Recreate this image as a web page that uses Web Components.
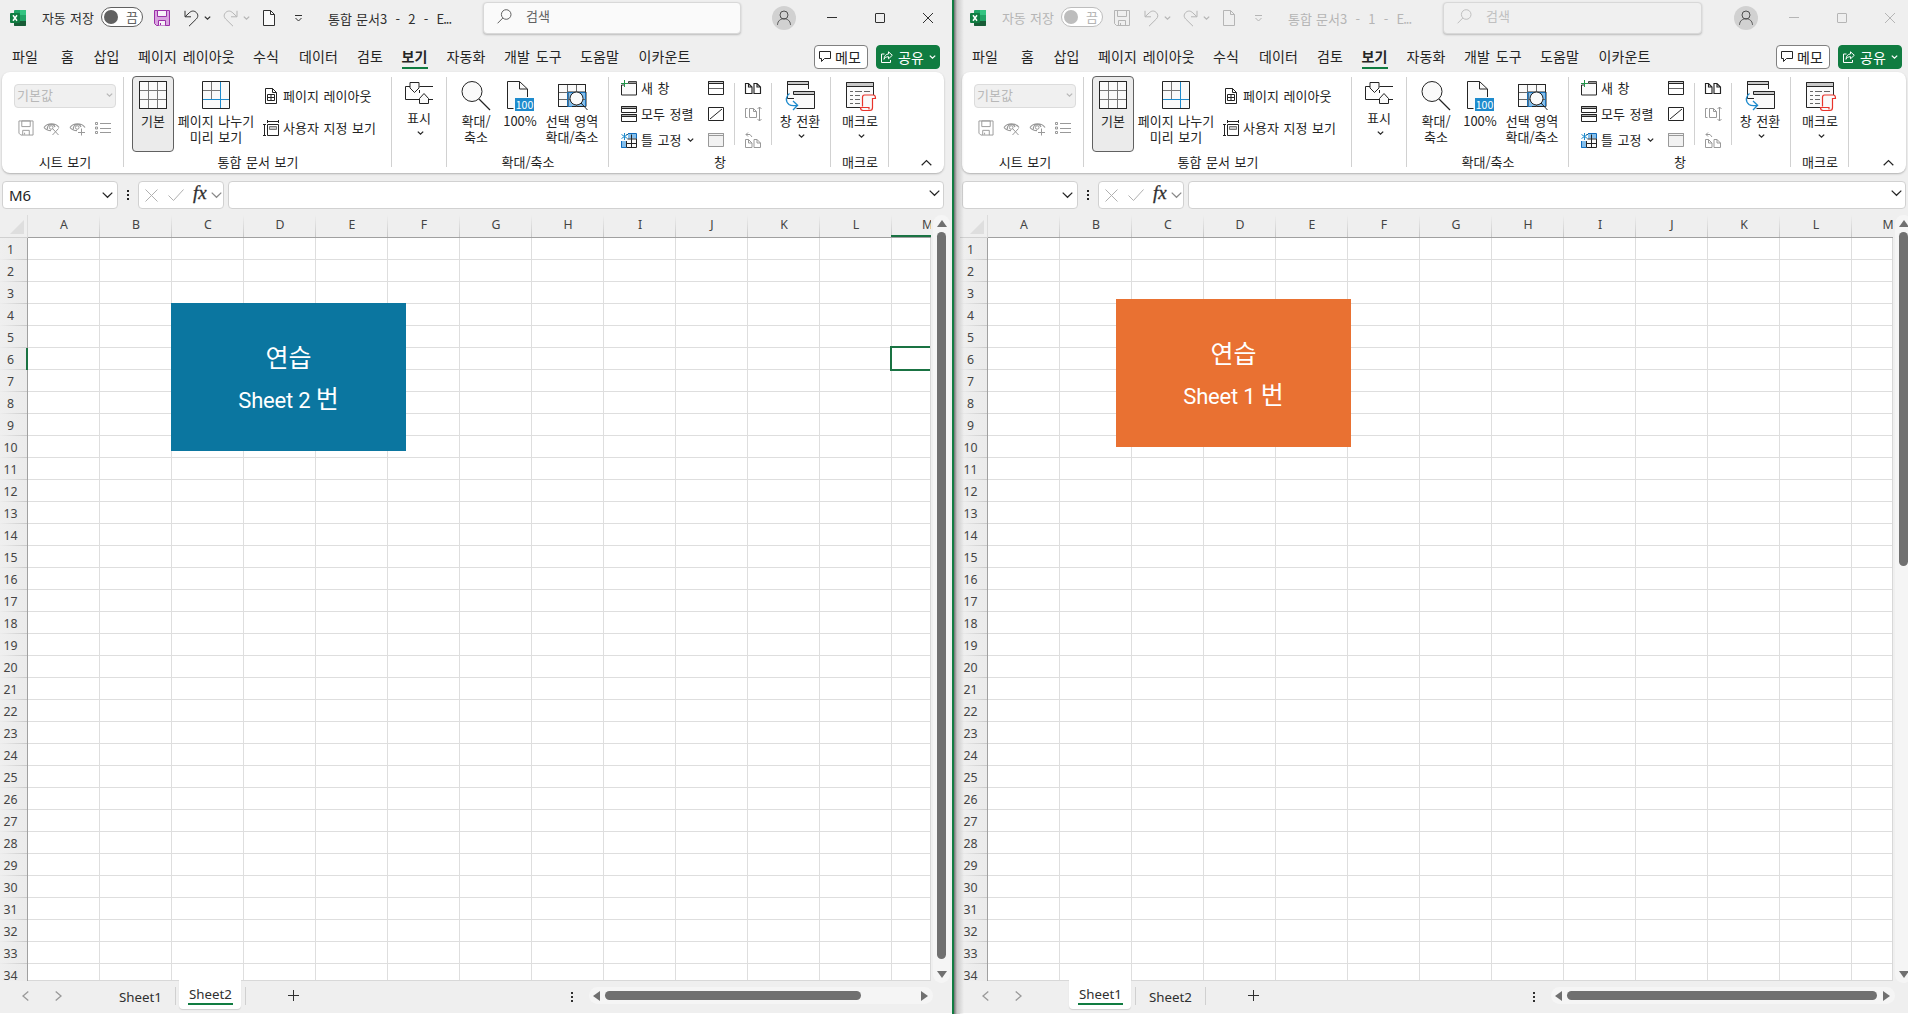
<!DOCTYPE html>
<html lang="ko">
<head>
<meta charset="utf-8">
<title>통합 문서3 - Excel</title>
<style>
    html, body {
        margin: 0;
        height: 100%;
        overflow: hidden;
        background: #efefef;
    }
    body {
        display: flex;
        font: 13px/16px "Noto Sans CJK KR", sans-serif;
        color: #242424;
    }
</style>
</head>
<body>
<excel-window class="front" size="952" book="2" cell="M6" active="2" thumb="727" hthumb="256"></excel-window>
<excel-window inactive size="954" book="1" cell="" active="1" thumb="334" hthumb="310"></excel-window>

<script>
// name: [width, height, markup]
const ICONS = {
    logo: [16, 16, `<g stroke="none"><rect x="4" width="12" height="16" rx="1" fill="#21a366"/><path d="M10 0h5a1 1 0 0 1 1 1v4h-6z" fill="#33c481"/><path d="M4 5h6v6H4z" fill="#107c41"/><path d="M10 5h6v6h-6z" fill="#21a366"/><path d="M4 11h12v4a1 1 0 0 1-1 1H5a1 1 0 0 1-1-1z" fill="#185c37"/><rect y="3" width="10" height="10" rx="1" fill="#107c41"/></g><path d="M3 5.300l4 5.400M7 5.300l-4 5.400" stroke="#fff" stroke-width="1.500"/>`],
    save: [16, 16, `<path d="M.5.5h15v15h-13l-2-2z" fill="var(--save-fill,none)"/><path d="M3.500.5h9v6h-9zM4.500 15.500v-5h7v5" fill="var(--save-inner,none)"/><path d="M6.500 15v-2"/>`],
    undo: [15, 17, `<path d="M1 .8v6h6M1.300 6.500L5.800 2.300c2.500-2 5-1.300 6.500.2 2 2 2 4.500 0 6.500L5 16.200"/>`],
    redo: [15, 17, `<path d="M14 .8v6H8M13.700 6.500L9.200 2.300c-2.500-2-5-1.300-6.500.2-2 2-2 4.500 0 6.500l7.300 7.200"/>`],
    page: [12, 16, `<path d="M.5.5h7l4 4v11H.5z" fill="var(--page-fill,#fafafa)"/><path d="M7.500.5v4h4"/>`],
    qat: [9, 7, `<path d="M1 .5h7M1.500 3l3 3 3-3"/>`],
    chev: [7, 4, `<path d="M.8.6l2.700 2.600L6.200.6" stroke-width="1.300"/>`],
    chevL: [11, 6, `<path d="M.7.6l4.800 4.700L10.300.6" stroke-width="1.200"/>`],
    up: [11, 6, `<path d="M.7 5.300L5.500.6l4.800 4.700" stroke-width="1.200"/>`],
    search: [15, 15, `<circle cx="9.200" cy="5.500" r="4.800"/><path d="M5.800 9L.6 14.300"/>`],
    person: [24, 24, `<circle cx="12" cy="12" r="12" fill="#d1d1d1" stroke="none"/><circle cx="12" cy="9" r="4"/><path d="M5.500 18.800c.3-4 2.800-6 6.500-6s6.200 2 6.500 6"/>`],
    min: [10, 10, `<path d="M0 4.500h10"/>`],
    max: [10, 10, `<rect x=".5" y=".5" width="9" height="9" rx=".5"/>`],
    close: [10, 10, `<path d="M0 0l10 10M10 0L0 10"/>`],
    memo: [12, 11, `<path d="M.5.5h11v7h-6l-3 3v-3h-2z"/>`],
    share: [12, 12, `<path d="M3.500 3H.5v8.500h9V9M7.500.8l3.800 3.500-3.800 3.500V5.700C5 5.700 3.700 6.800 3 8.300 3.300 5 4.800 3.200 7.500 2.900z"/>`],
    eyex: [17, 15, `<path d="M1 6.500c3.500-5 11.500-5 15 0M4.500 8.500A4 4 0 0 1 8.200 3.300 4 4 0 0 1 12 6M1 6.500C3 9 5.500 9.700 8 9.700" stroke-width="1.200"/><circle cx="8.200" cy="6.500" r="1.800"/><path d="M9.500 7.500l6 6.500M15.500 7.500l-6 6.500"/>`],
    eyeplus: [17, 15, `<path d="M1 6.500c3.500-5 11.500-5 15 0M4.500 8.500A4 4 0 0 1 8.200 3.300 4 4 0 0 1 12 6M1 6.500C3 9 5.500 9.700 8 9.700" stroke-width="1.200"/><circle cx="8.200" cy="6.500" r="1.800"/><path d="M12.500 7.500v7M9 11.500h7"/>`],
    list: [16, 12, `<path d="M5 1.500h11M5 6.500h11M5 10.500h11"/><path d="M.5.5h2v2h-2zM.5 5h2v2h-2zM.5 9.500h2v2h-2z"/>`],
    normal: [28, 28, `<path d="M.5.500h27v27H.5z" fill="#fafafa"/><path d="M9.500 1v26M18.500 1v26M1 9.500h26M1 18.500h26" stroke="#777"/><path d="M.5.500h27v27H.5z"/>`],
    pagebreak: [28, 28, `<path d="M.5.500h27v27H.5z" fill="#fafafa"/><path d="M9.500 1v17M1 9.500h17" stroke="#777"/><path d="M18.500 1v26M1 18.500h26" stroke="#1e8bcd"/>`],
    pagelayout: [12, 16, `<path d="M.5.500h7l4 4v11H.5z"/><path d="M7.500.5v4h4M2.500 6.500h7v6h-7zM6 6.500v6M2.500 9.500h7"/>`],
    custom: [16, 16, `<path d="M0 4.500h3M1.500 4.500v11M0 15.500h3M4.500 0v3M15.500 0v3M4.500 1.500h11"/><path d="M4.500 4.500h11v11h-11z"/><path d="M6.500 6.500h7v3h-7z" fill="#c8c8c8" stroke="#777"/>`],
    show: [29, 23, `<path d="M5 5.500H.5v13h14M14.500 5.500H28M14.500 9v3M24 18.500h4"/><path d="M5 1.500h9V7L9.500 11.500 5 7z" fill="#fafafa"/><path d="M14.500 22.500v-5l4.500-5 4.500 5v5z" fill="#fafafa"/>`],
    zoom: [30, 30, `<circle cx="11" cy="10.500" r="10" fill="#fafafa"/><path d="M18 18l11 11" stroke-width="1.300"/>`],
    hundred: [27, 30, `<path d="M6.500 27.500h-6V.5h12l8 7.500v8" fill="#fafafa"/><path d="M12.500.5V8h8"/><path d="M8 17h19v13H8z" fill="#1e8bcd" stroke="none"/><text x="17.500" y="27.500" text-anchor="middle" font-family="Noto Sans CJK KR" font-size="10.500" fill="#fff" stroke="none">100</text>`],
    zoomsel: [30, 30, `<g transform="translate(1 0)"><path d="M.5 3.500h27v22H.5z" fill="#fafafa"/><path d="M10 11h18v14.500H10z" fill="#83beec"/><path d="M.5 11.500h27M.5 18.500h27M9.500 3.500v22M18.500 3.500v22" stroke="#666"/><path d="M27.500 25.500V11.500h-18v14H14" stroke="#1a6fb5"/><path d="M9.500 25.500H.5v-22h27v8"/><circle cx="18.500" cy="17.500" r="6.500" fill="#fafafa"/><path d="M23 22l6.500 7"/></g>`],
    newwin: [16, 16, `<path d="M3.500 5H.5v10h15V2.500H8" fill="#fafafa"/><path d="M7.500 1.500h8v2h-8z" fill="#999" stroke="#444"/><path d="M3.500 0v7M0 3.500h7" stroke="#21954a"/>`],
    arrange: [16, 16, `<path d="M.5.5h15v6H.5zM.5 8.500h15v7H.5z"/><path d="M.5.500h15v2H.5zM.5 8.500h15v2H.5z" fill="#aaa"/>`],
    freeze: [16, 15, `<path d="M5.500 1.500h10v13H.5V8" fill="#fafafa"/><path d="M7 1h9v4.500H7zM0 8h5.500v7H0z" fill="#83beec" stroke="none"/><path d="M6.500 6h9M6 10.500h9.500M5.500 8v6.500M10.500 1.500v13"/><path d="M7 .5h8.500v5M.5 8v6.500h5" stroke="#0f6cbd"/><path d="M3.500 0v7M.5 1.500l6 4M6.500 1.500l-6 4" stroke="#1e8bcd"/>`],
    split: [16, 14, `<path d="M.5.500h15v13H.5z"/><path d="M.5.500h15v2H.5z" fill="#c8c8c8"/><path d="M1 7.500h14" stroke="#666"/>`],
    hide: [16, 14, `<path d="M.5.500h15v13H.5zM2 12L14 2"/>`],
    unhide: [16, 14, `<path d="M.5.500h15v13H.5z" fill="#f2f2f2"/><path d="M.5.500h15v2H.5z"/>`],
    side: [16, 11, `<path d="M.5.500h3L7 4v6.500H.5zM3.500.5V4H7M9 .5h3L15.500 4v6.500H9zM12 .5V4h3.500" stroke-width="1.150"/>`],
    sync: [16, 16, `<path d="M2.500 2.500h-2v9h2M4.500 2.500h4l3 3v6h-7zM8.500 2.500v3h3M14.500 1v14M12.500 3l2-2 2 2M12.500 13l2 2 2-2"/>`],
    reset: [16, 16, `<path d="M.5 7.500h3L7 11v4.500H.5zM3.500 7.500V11H7M9 7.500h3l3.500 3.500v4.500H9zM12 7.500V11h3.500M3 .5l-2 2 2 2M1 2.500h4l2 2.500"/>`],
    switchwin: [30, 29, `<path d="M9 17.500H2.500V.5h21V8" fill="#fafafa"/><path d="M2.500.500h21v3h-21z" fill="#c8c8c8"/><path d="M8.500 10.500h21v17h-18" fill="#fafafa"/><path d="M8.500 10.500h21v3h-21z" fill="#c8c8c8"/><path d="M4.500 12.500c-3.800 2.500-4.500 7.500-.5 11 2 1.600 5 1.400 8.500.8M8 20l4.600 4.300L8 29" stroke="#1e8bcd" stroke-width="1.300"/>`],
    macro: [30, 30, `<g transform="translate(1 0)"><path d="M16 26.500H.5V1.500h27v13" fill="#fafafa"/><path d="M.5 1.500h27v4H.5z" fill="#c8c8c8"/><path d="M4 10.500h3M9 10.500h7M18 10.500h6M4 14.500h3M9 14.500h5M4 18.500h3M9 18.500h5M4 22.500h3M9 22.500h5" stroke="#666"/><path d="M16.500 25.500v-9c0-2 1-2.500 2-2.500h9c1.500 0 2 1 2 3.500h-3v9c0 2-1 3-2.500 3h-7c-2 0-2.500-1-2.500-3h8.500v2" fill="#fafafa" stroke="#e8342c" stroke-width="1.200"/></g>`],
    dots: [2, 10, `<path d="M0 0h2v2H0zM0 4h2v2H0zM0 8h2v2H0z" fill="currentColor" stroke="none"/>`],
    cross: [13, 13, `<path d="M.5.500l12 12M12.500.500l-12 12"/>`],
    check: [16, 12, `<path d="M.5 6.500l5 5L15.500.5"/>`],
    prev: [7, 10, `<path d="M6.300.5L1 5l5.300 4.500" stroke-width="1.300"/>`],
    next: [7, 10, `<path d="M.7.5L6 5 .7 9.500" stroke-width="1.300"/>`],
    plus: [11, 11, `<path d="M5.500 0v11M0 5.500h11"/>`],
    triUp: [10, 7, `<path d="M5 0l5 7H0z" fill="#707070" stroke="none"/>`],
    triDown: [10, 7, `<path d="M5 7l5-7H0z" fill="#707070" stroke="none"/>`],
    triLeft: [7, 10, `<path d="M0 5l7-5v10z" fill="#707070" stroke="none"/>`],
    triRight: [7, 10, `<path d="M7 5L0 0v10z" fill="#707070" stroke="none"/>`]
};

class UiIcon extends HTMLElement {
    connectedCallback() {
        const [w, h, body] = ICONS[this.getAttribute("name")];
        this.attachShadow({ mode: "open" }).innerHTML = `
        <style>
            :host { display: block; flex: none; width: ${w}px; height: ${h}px; }
            svg { display: block; overflow: visible; }
        </style>
        <svg width="${w}" height="${h}" viewBox="0 0 ${w} ${h}" fill="none" stroke="currentColor">${body}</svg>`;
    }
}
customElements.define("ui-icon", UiIcon);

class TitleBar extends HTMLElement {
    connectedCallback() {
        this.attachShadow({ mode: "open" }).innerHTML = `
        <style>
            :host {
                display: flex;
                align-items: center;
                height: 36px;
                color: #303030;
                word-spacing: 1px;
                --save-fill: #d9a3e0;
                --save-inner: #f6f0f7;
            }
            :host([inactive]) { color: #b5b5b5; --save-fill: none; --save-inner: none; --page-fill: none; }
            .logo { margin: 0 16px 0 10px; }
            .auto { width: 59px; white-space: nowrap; padding-bottom: 1px; letter-spacing: -.15px; }
            .toggle {
                box-sizing: border-box;
                width: 42px;
                height: 20px;
                margin: 0 11px 2px 0;
                border: 1px solid #616161;
                border-radius: 10px;
                background: #fff;
                display: flex;
                align-items: center;
                gap: 8px;
                padding-left: 2px;
                color: #616161;
            }
            .toggle i { width: 14px; height: 14px; border-radius: 50%; background: #616161; }
            :host([inactive]) .toggle { border-color: #bdbdbd; color: #b5b5b5; }
            :host([inactive]) .toggle i { background: #bdbdbd; }
            .save { margin-right: 14px; color: #9b2fa8; }
            :host([inactive]) .save, .dim { color: #b5b5b5; }
            .chev { margin: 0 12px 0 5px; }
            .page { margin: 0 19px 0 1px; }
            .title { margin-left: 25px; width: 155px; white-space: pre; padding-top: 2px; word-spacing: .5px; }
            .more { letter-spacing: -1px; }
            .search {
                box-sizing: border-box;
                width: 258px;
                height: 32px;
                border: 1px solid #d8d8d8;
                border-radius: 4px;
                background: #fafafa;
                box-shadow: 0 1px 2px #bbb;
                display: flex;
                align-items: center;
                gap: 14px;
                padding: 0 0 3px 13px;
                color: #616161;
            }
            .search span { margin-top: -1px; }
            :host([inactive]) .search { width: 259px; background: #f0f0f0; color: #c0c0c0; }
            .person { margin: 0 31px; color: #505050; }
            :host([inactive]) .person { margin-left: 32px; }
            .win { margin-right: 38px; }
        </style>
        <ui-icon class="logo" name="logo"></ui-icon>
        <span class="auto">자동 저장</span>
        <div class="toggle"><i></i>끔</div>
        <ui-icon class="save" name="save"></ui-icon>
        <ui-icon name="undo"></ui-icon><ui-icon class="chev" name="chev"></ui-icon>
        <ui-icon class="dim" name="redo"></ui-icon><ui-icon class="chev dim" name="chev"></ui-icon>
        <ui-icon class="page" name="page"></ui-icon>
        <ui-icon name="qat"></ui-icon>
        <span class="title">통합 문서3  -  ${this.getAttribute("book")}  -  <span class="more">E...</span></span>
        <div class="search"><ui-icon name="search"></ui-icon><span>검색</span></div>
        <ui-icon class="person" name="person"></ui-icon>
        <ui-icon class="win" name="min"></ui-icon>
        <ui-icon class="win" name="max"></ui-icon>
        <ui-icon name="close"></ui-icon>`;
    }
}
customElements.define("title-bar", TitleBar);

// label and distance to the next tab
const TABS = [["파일", 49], ["홈", 32.5], ["삽입", 44.5], ["페이지 레이아웃", 115], ["수식", 46], ["데이터", 58], ["검토", 44.5],
    ["보기", 45], ["자동화", 57.5], ["개발 도구", 76], ["도움말", 58.5], ["이카운트", 60]];

class TabStrip extends HTMLElement {
    connectedCallback() {
        this.attachShadow({ mode: "open" }).innerHTML = `
        <style>
            :host {
                display: flex;
                height: 36px;
                padding: 0 12px 0 12px;
                font-size: 14px;
                letter-spacing: .12px;
                word-spacing: 1.800px;
                white-space: nowrap;
            }
            .tab { flex: none; line-height: 16px; padding-top: 12px; }
            .on span {
                display: inline-block;
                font-weight: 700;
                height: 19px;
                border-bottom: 2px solid #107c41;
            }
            button {
                box-sizing: border-box;
                display: flex;
                align-items: center;
                gap: 5px;
                height: 24px;
                margin: 9px 0 0;
                padding: 0 0 1px 4px;
                border: 1px solid #808080;
                border-radius: 4px;
                background: #fff;
                color: #242424;
                font: inherit;
                line-height: 16px;
            }
            .memo { width: 54px; margin-left: auto; gap: 4px; }
            .share { width: 64px; margin-left: 8px; background: #107c41; border-color: #107c41; color: #fff; }
        </style>
        ${TABS.map(([t, w]) => `<div class="tab${t === "보기" ? " on" : ""}" style="width:${w}px"><span>${t}</span></div>`).join("")}
        <button class="memo"><ui-icon name="memo"></ui-icon>메모</button>
        <button class="share"><ui-icon name="share"></ui-icon>공유<ui-icon name="chev"></ui-icon></button>`;
    }
}
customElements.define("tab-strip", TabStrip);

class RibbonGroup extends HTMLElement {
    connectedCallback() {
        this.attachShadow({ mode: "open" }).innerHTML = `
        <style>
            :host {
                box-sizing: border-box;
                display: flex;
                flex-direction: column;
                height: 101px;
                background: linear-gradient(#d1d1d1, #d1d1d1) right 5px / 1px 90px no-repeat;
            }
            .body { display: flex; height: 78px; padding-top: 4px; }
            .label { text-align: center; white-space: nowrap; padding-left: var(--label-shift, 0); }
        </style>
        <div class="body"><slot></slot></div>
        <div class="label">${this.getAttribute("label") || ""}</div>`;
    }
}
customElements.define("ribbon-group", RibbonGroup);

class RibbonButton extends HTMLElement {
    connectedCallback() {
        this.attachShadow({ mode: "open" }).innerHTML = `
        <style>
            :host {
                box-sizing: border-box;
                display: flex;
                flex-direction: column;
                align-items: center;
                flex: none;
                height: 76px;
                padding-top: 5px;
                text-align: center;
                white-space: nowrap;
            }
            :host([pressed]) {
                border: 1px solid #616161;
                border-radius: 4px;
                background: #ebebeb;
                padding-top: 4px;
            }
            .icon { height: var(--icon-height, 32px); }
            .more { margin: 5px 0 0 2px; }
        </style>
        <div class="icon"><ui-icon name="${this.getAttribute("icon")}"></ui-icon></div>
        <div><slot></slot></div>
        ${this.hasAttribute("more") ? `<ui-icon class="more" name="chev"></ui-icon>` : ""}`;
    }
}
customElements.define("ribbon-button", RibbonButton);

class RibbonItem extends HTMLElement {
    connectedCallback() {
        this.attachShadow({ mode: "open" }).innerHTML = `
        <style>
            :host { display: flex; align-items: center; height: 26px; white-space: nowrap; }
            :host([off]) { color: #999; }
            .box { width: 16px; margin-right: 4px; display: flex; justify-content: center; }
            .more { margin-left: 5px; }
        </style>
        <div class="box"><ui-icon name="${this.getAttribute("icon")}"></ui-icon></div>
        <slot></slot>
        ${this.hasAttribute("more") ? `<ui-icon class="more" name="chev"></ui-icon>` : ""}`;
    }
}
customElements.define("ribbon-item", RibbonItem);

class RibbonBar extends HTMLElement {
    connectedCallback() {
        this.attachShadow({ mode: "open" }).innerHTML = `
        <style>
            :host {
                display: grid;
                grid-template-columns: 122px 268px 55px 162px 222px 58px 1fr;
                height: 101px;
                margin: 0 8px 0 2px;
                border-radius: 8px;
                background: #fff;
                box-shadow: 0 1px 2px #b0b0b0;
                word-spacing: 1px;
            }
            .views { width: 102px; margin: 8px 0 0 12px; }
            .select {
                box-sizing: border-box;
                height: 24px;
                border: 1px solid #dcdcdc;
                border-radius: 4px;
                background: #f0f0f0;
                color: #b8b8b8;
                display: flex;
                align-items: center;
                justify-content: space-between;
                padding: 0 2px 2px 2px;
            }
            .tools { display: flex; align-items: center; gap: 9px; color: #999; padding: 12px 4px 0; }
            .tools :first-child { transform: scale(.94); }
            .stack { display: flex; flex-direction: column; }
            .roomy { margin: 4px 0 0 7px; }
            .roomy ribbon-item { height: 32px; }
            .tight { margin-top: -1px; }
            .rule { width: 1px; height: 62px; background: #d1d1d1; margin: 7px 0 0; }
            .collapse { justify-self: end; margin: 88px 12px 0 0; }
        </style>
        <ribbon-group label="시트 보기" style="--label-shift:4px">
            <div class="views">
                <div class="select">기본값<ui-icon name="chev"></ui-icon></div>
                <div class="tools"><ui-icon name="save"></ui-icon><ui-icon name="eyex"></ui-icon><ui-icon name="eyeplus"></ui-icon><ui-icon name="list"></ui-icon></div>
            </div>
        </ribbon-group>
        <ribbon-group label="통합 문서 보기">
            <ribbon-button pressed icon="normal" style="width:42px;margin-left:8px">기본</ribbon-button>
            <ribbon-button icon="pagebreak" style="width:80px;margin-left:2px">페이지 나누기<br>미리 보기</ribbon-button>
            <div class="stack roomy">
                <ribbon-item icon="pagelayout">페이지 레이아웃</ribbon-item>
                <ribbon-item icon="custom">사용자 지정 보기</ribbon-item>
            </div>
        </ribbon-group>
        <ribbon-group>
            <ribbon-button icon="show" more style="width:54px;--icon-height:29px">표시</ribbon-button>
        </ribbon-group>
        <ribbon-group label="확대/축소">
            <ribbon-button icon="zoom" style="width:40px;margin-left:9px">확대/<br>축소</ribbon-button>
            <ribbon-button icon="hundred" style="width:44px;margin-left:2px">100%</ribbon-button>
            <ribbon-button icon="zoomsel" style="width:56px;margin-left:2px">선택 영역<br>확대/축소</ribbon-button>
        </ribbon-group>
        <ribbon-group label="창">
            <div class="stack tight" style="width:87px;margin-left:12px">
                <ribbon-item icon="newwin">새 창</ribbon-item>
                <ribbon-item icon="arrange">모두 정렬</ribbon-item>
                <ribbon-item icon="freeze" more>틀 고정</ribbon-item>
            </div>
            <div class="stack tight" style="width:26px">
                <ribbon-item icon="split"></ribbon-item>
                <ribbon-item icon="hide"></ribbon-item>
                <ribbon-item icon="unhide" off></ribbon-item>
            </div>
            <div class="rule"></div>
            <div class="stack tight" style="width:26px;margin-left:10px">
                <ribbon-item icon="side"></ribbon-item>
                <ribbon-item icon="sync" off></ribbon-item>
                <ribbon-item icon="reset" off></ribbon-item>
            </div>
            <div class="rule"></div>
            <ribbon-button icon="switchwin" more style="width:56px">창 전환</ribbon-button>
        </ribbon-group>
        <ribbon-group label="매크로">
            <ribbon-button icon="macro" more style="width:58px">매크로</ribbon-button>
        </ribbon-group>
        <ui-icon class="collapse" name="up"></ui-icon>`;
    }
}
customElements.define("ribbon-bar", RibbonBar);

class FormulaBar extends HTMLElement {
    connectedCallback() {
        this.attachShadow({ mode: "open" }).innerHTML = `
        <style>
            :host { display: flex; height: 28px; margin: 8px 8px 0 2px; }
            div {
                box-sizing: border-box;
                display: flex;
                align-items: center;
                border: 1px solid #d1d1d1;
                border-radius: 4px;
                background: #fff;
            }
            .name {
                width: 116px;
                padding: 0 4px 0 6px;
                justify-content: space-between;
                font: 15px/20px "Noto Sans", "Open Sans", sans-serif;
            }
            .dots { margin: 9px 9px 0; width: 2px; }
            .fx { width: 86px; padding-left: 6px; color: #b0b0b0; margin-right: 4px; }
            .fx i { font: italic 19px/20px "Liberation Serif", serif; color: #303030; margin: -4px 4px 0 9px; -webkit-text-stroke: .300px; }
            .fx ui-icon + ui-icon { margin-left: 10px; }
            .fx ui-icon:last-child { color: #888; }
            .input { flex: 1; justify-content: flex-end; padding: 0 3px 4px 0; }
        </style>
        <div class="name"><span>${this.getAttribute("cell")}</span><ui-icon name="chevL"></ui-icon></div>
        <ui-icon class="dots" name="dots"></ui-icon>
        <div class="fx"><ui-icon name="cross"></ui-icon><ui-icon name="check"></ui-icon><i>fx</i><ui-icon name="chevL"></ui-icon></div>
        <div class="input"><ui-icon name="chevL"></ui-icon></div>`;
    }
}
customElements.define("formula-bar", FormulaBar);

class SheetGrid extends HTMLElement {
    connectedCallback() {
        const cols = [..."ABCDEFGHIJKLM"];
        const rows = Array.from({ length: 34 }, (_, i) => i + 1);
        const cell = this.getAttribute("cell");
        this.attachShadow({ mode: "open" }).innerHTML = `
        <style>
            :host {
                display: grid;
                grid-template: 23px 743px / 28px 1fr;
                font: 12.300px/22px "Noto Sans", "Open Sans", sans-serif;
                color: #444;
                overflow: hidden;
            }
            .corner {
                box-sizing: border-box;
                border-bottom: 1px solid #d0d0d0;
                border-right: 1px solid #dcdcdc;
                display: flex;
                justify-content: flex-end;
                padding: 5px 3px 0 0;
            }
            .corner i { width: 14px; height: 14px; background: #dedede; clip-path: polygon(100% 0, 100% 100%, 0 100%); }
            .cols { display: flex; overflow: hidden; border-bottom: 1px solid #a0a0a0; }
            .cols span {
                box-sizing: border-box;
                flex: none;
                width: 72px;
                text-align: center;
                line-height: 20px;
                background: linear-gradient(#efefef, #c8c8c8) right 0 / 1px 22px no-repeat;
            }
            .cols .on { box-shadow: inset 0 -2px #1a7343; margin-left: -1px; width: 73px; }
            .rows { overflow: hidden; background: linear-gradient(90deg, #efefef, #ebebeb); }
            .rows span {
                box-sizing: border-box;
                display: block;
                height: 22px;
                padding-right: 7px;
                text-align: center;
                line-height: 23px;
                background: linear-gradient(90deg, #ededed, #c8c8c8) 0 21px / 100% 1px no-repeat;
                box-shadow: inset -1px 0 #a0a0a0;
            }
            .rows .on { box-shadow: inset -2px 0 #1a7343; }
            .cells {
                position: relative;
                overflow: hidden;
                border-right: 1px solid #d8d8d8;
                border-bottom: 1px solid #d8d8d8;
                background:
                    repeating-linear-gradient(90deg, transparent 0 71px, #dedede 71px 72px),
                    repeating-linear-gradient(#fff 0 21px, #dedede 21px 22px);
            }
            .cursor {
                position: absolute;
                left: 862px;
                top: 108px;
                width: 74px;
                height: 21px;
                border: 2px solid #1a7343;
            }
        </style>
        <div class="corner"><i></i></div>
        <div class="cols">${cols.map(c => `<span class="${cell && c === "M" ? "on" : ""}">${c}</span>`).join("")}</div>
        <div class="rows">${rows.map(r => `<span class="${cell && r === 6 ? "on" : ""}">${r}</span>`).join("")}</div>
        <div class="cells">${cell ? `<div class="cursor"></div>` : ""}<slot></slot></div>`;
    }
}
customElements.define("sheet-grid", SheetGrid);

// A rectangle floating over the cells
class SheetShape extends HTMLElement {
    connectedCallback() {
        this.attachShadow({ mode: "open" }).innerHTML = `
        <style>
            :host {
                box-sizing: border-box;
                position: absolute;
                width: 235px;
                height: 148px;
                padding-top: 5px;
                display: flex;
                flex-direction: column;
                justify-content: center;
                text-align: center;
                color: #fff;
                font: 22px/41px Roboto, "Noto Sans CJK KR", sans-serif;
                letter-spacing: -.200px;
            }
            .ko { font: 25px/35px "Noto Sans CJK KR", sans-serif; letter-spacing: 0; }
            p { margin: 0; height: 41px; }
        </style>
        <p><span class="ko">연습</span></p>
        <p>Sheet ${this.getAttribute("number")} <span class="ko">번</span></p>`;
    }
}
customElements.define("sheet-shape", SheetShape);

class ScrollTrack extends HTMLElement {
    connectedCallback() {
        const flat = this.hasAttribute("horizontal");
        const size = this.getAttribute("thumb");
        this.attachShadow({ mode: "open" }).innerHTML = `
        <style>
            :host {
                box-sizing: border-box;
                display: flex;
                flex-direction: ${flat ? "row" : "column"};
                align-items: center;
                gap: 5px;
                padding: ${flat ? "4px 5px 4px 4px" : "5px"};
                border-radius: 9px;
                background: #f5f5f5;
            }
            i { flex: none; width: ${flat ? size : 9}px; height: ${flat ? 9 : size}px; border-radius: 5px; background: #707070; }
            .end { margin-${flat ? "left" : "top"}: auto; }
        </style>
        <ui-icon name="${flat ? "triLeft" : "triUp"}"></ui-icon><i></i><ui-icon class="end" name="${flat ? "triRight" : "triDown"}"></ui-icon>`;
    }
}
customElements.define("scroll-track", ScrollTrack);

class SheetTabs extends HTMLElement {
    connectedCallback() {
        const active = this.getAttribute("active");
        this.attachShadow({ mode: "open" }).innerHTML = `
        <style>
            :host {
                display: flex;
                height: 32px;
                border-bottom: 1px solid #fff;
                font: 13.300px/18px "Noto Sans", "Open Sans", sans-serif;
                color: #303030;
            }
            .prev { margin: 10px 26px 0 22px; color: #999; }
            .next { margin: 10px 47px 0 0; color: #999; }
            .tab { position: relative; box-sizing: border-box; width: 70px; height: 29px; padding: 7px 0 0 10px; margin-top: -1px; }
            .tab:not(.on) { padding-top: 8px; }
            .tab::after { content: ""; position: absolute; right: 3px; top: 7px; width: 1px; height: 18px; background: #d0d0d0; }
            .on span {
                box-sizing: border-box;
                display: block;
                width: 62px;
                height: 29px;
                margin: -7px 0 0 -10px;
                padding: 5px 8px 0 9px;
                background: #fff;
                border-radius: 0 0 4px 4px;
                box-shadow: 0 1px 1px #d0d0d0;
            }
            .on b { display: block; font-weight: 400; height: 18px; white-space: nowrap; text-indent: 1px; border-bottom: 2px solid #107c41; }
            .plus { margin: 9px 0 0 39px; }
            .dots { margin: 11px 16px 0 auto; }
            scroll-track { height: 17px; margin-top: 6px; width: 344px; margin-right: 19px; }
        </style>
        <ui-icon class="prev" name="prev"></ui-icon>
        <ui-icon class="next" name="next"></ui-icon>
        ${["1", "2"].map(n => n === active ? `<div class="tab on"><span><b>Sheet${n}</b></span></div>` : `<div class="tab">Sheet${n}</div>`).join("")}
        <ui-icon class="plus" name="plus"></ui-icon>
        <ui-icon class="dots" name="dots"></ui-icon>
        <scroll-track horizontal thumb="${this.getAttribute("thumb")}"></scroll-track>`;
    }
}
customElements.define("sheet-tabs", SheetTabs);

class ExcelWindow extends HTMLElement {
    connectedCallback() {
        const at = name => this.getAttribute(name);
        const off = this.hasAttribute("inactive") ? "inactive" : "";
        this.attachShadow({ mode: "open" }).innerHTML = `
        <style>
            :host { position: relative; flex: none; width: ${at("size")}px; height: 1014px; background: #efefef; }
            :host(.front) { border-right: 2px solid #107c41; }
            :host([inactive]) { margin-left: 6px; }
            .shade {
                position: absolute;
                left: -6px;
                top: 0;
                width: 10px;
                height: 100%;
                background: linear-gradient(90deg, rgba(60,60,60,.7), rgba(90,90,90,.25) 30%, transparent);
            }
            .sheet { display: flex; padding-top: 6px; height: 766px; }
            sheet-grid { flex: none; width: ${at("size") - 21}px; }
            scroll-track { flex: none; width: 17px; height: 768px; margin-left: 2px; }
            .foot { width: 40px; height: 1px; margin-left: 637px; background: #d8d8d8; }
        </style>
        <title-bar ${off} book="${at("book")}"></title-bar>
        <tab-strip></tab-strip>
        <ribbon-bar></ribbon-bar>
        <formula-bar cell="${at("cell")}"></formula-bar>
        <div class="sheet">
            <sheet-grid cell="${at("cell")}">
                <sheet-shape number="${at("book")}" style="${off ? "left:128px;top:61px;background:#e97132" : "left:143px;top:65px;background:#0b76a0"}"></sheet-shape>
            </sheet-grid>
            <scroll-track thumb="${at("thumb")}"></scroll-track>
        </div>
        <sheet-tabs active="${at("active")}" thumb="${at("hthumb")}"></sheet-tabs>
        <div class="foot"></div>
        ${off ? `<div class="shade"></div>` : ""}`;
    }
}
customElements.define("excel-window", ExcelWindow);
</script>
</body>
</html>
